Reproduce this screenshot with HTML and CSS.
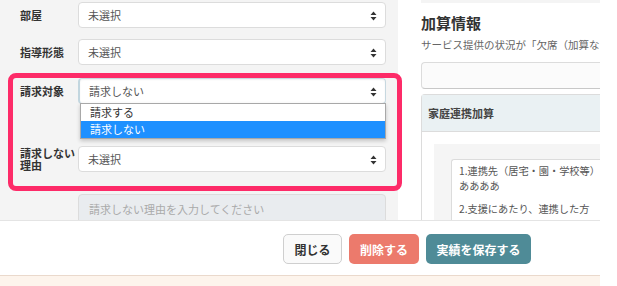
FILE: index.html
```html
<!doctype html>
<html>
    <head>
        <title>実績入力</title>
        <link rel="stylesheet" href="styles.css">
    </head>
    <body>
        <div class="modal">
            <div class="modal-body">
                <div class="left">
                    <div class="row">
                        <div class="label">部屋</div>
                        <div class="select">未選択<svg class="arrow" width="7" height="10" viewBox="0 0 7 10"><path d="M0.5 4 L3.5 0.5 L6.5 4 Z M0.5 6 L3.5 9.5 L6.5 6 Z" fill="#333"/></svg></div>
                    </div>
                    <div class="row">
                        <div class="label">指導形態</div>
                        <div class="select">未選択<svg class="arrow" width="7" height="10" viewBox="0 0 7 10"><path d="M0.5 4 L3.5 0.5 L6.5 4 Z M0.5 6 L3.5 9.5 L6.5 6 Z" fill="#333"/></svg></div>
                    </div>
                    <div class="highlight">
                        <div class="row row-open">
                            <div class="label">請求対象</div>
                            <div class="select focused">請求しない<svg class="arrow" width="7" height="10" viewBox="0 0 7 10"><path d="M0.5 4 L3.5 0.5 L6.5 4 Z M0.5 6 L3.5 9.5 L6.5 6 Z" fill="#333"/></svg>
                                <ul class="dropdown">
                                    <li>請求する</li>
                                    <li class="selected">請求しない</li>
                                </ul>
                            </div>
                        </div>
                        <div class="row row-reason">
                            <div class="label">請求しない理由</div>
                            <div class="select">未選択<svg class="arrow" width="7" height="10" viewBox="0 0 7 10"><path d="M0.5 4 L3.5 0.5 L6.5 4 Z M0.5 6 L3.5 9.5 L6.5 6 Z" fill="#333"/></svg></div>
                        </div>
                    </div>
                    <div class="row row-text">
                        <div class="label"></div>
                        <div class="textbox">請求しない理由を入力してください</div>
                    </div>
                </div>
                <div class="right">
                    <div class="top-strip"></div>
                    <h2>加算情報</h2>
                    <p class="note">サービス提供の状況が「欠席（加算な</p>
                    <div class="empty-box"></div>
                    <div class="card">
                        <div class="card-header">家庭連携加算</div>
                        <div class="card-body">
                            <div class="inner">
                                <div class="memo">
                                    <p>1.連携先（居宅・園・学校等）<br>ああああ</p>
                                    <p>2.支援にあたり、連携した方</p>
                                </div>
                            </div>
                        </div>
                    </div>
                </div>
            </div>
            <div class="modal-footer">
                <button class="btn btn-close">閉じる</button>
                <button class="btn btn-delete">削除する</button>
                <button class="btn btn-save">実績を保存する</button>
            </div>
            <div class="footer-strip"></div>
        </div>
    </body>
</html>
```

FILE: styles.css
```css
* {
    box-sizing: border-box;
}
body {
    margin: 0;
    background: #fff;
    color: #333;
    font-family: "Noto Sans CJK JP", "Noto Sans", sans-serif;
    font-size: 11px;
    overflow: hidden;
}
.modal {
    width: 600px;
}
.modal-body {
    display: flex;
    height: 220px;
    overflow: hidden;
}
.left {
    width: 398px;
    flex: none;
    background: #f4f4f4;
    padding: 2px 12px 0 20px;
}
.row {
    display: flex;
    align-items: center;
    margin-bottom: 11px;
}
.label {
    width: 58px;
    flex: none;
    font-weight: bold;
    color: #333;
    line-height: 12px;
}
.select {
    position: relative;
    flex: 1;
    height: 26px;
    background: #fff;
    border: 1px solid #dcdcdc;
    border-radius: 4px;
    padding: 0 9px;
    display: flex;
    align-items: center;
    color: #555;
}
.select.focused {
    border-color: #c7d8e0;
    border-left: 2px solid #c2d6df;
    box-shadow: inset 0 1px 2px rgba(0, 0, 0, 0.06);
}
.arrow {
    position: absolute;
    right: 8px;
    top: 8px;
}
.highlight {
    margin: -3px -16px 3px -12px;
    padding: 0 11px 0 7px;
    border: 5px solid #fd2b68;
    border-radius: 8px;
}
.row-open {
    margin-bottom: 42px;
}
.row-reason {
    margin-bottom: 14px;
}
.dropdown {
    position: absolute;
    left: 0;
    right: -1px;
    top: 24px;
    margin: 0;
    padding: 0;
    list-style: none;
    background: #fff;
    border: 1px solid #a8a8a8;
    box-shadow: 0 2px 4px rgba(0, 0, 0, 0.2);
    z-index: 2;
}
.dropdown li {
    height: 17px;
    line-height: 17px;
    padding-left: 9px;
    color: #333;
}
.dropdown li.selected {
    background: #1e90ff;
    color: #fff;
}
.textbox {
    flex: 1;
    height: 30px;
    background: #e9ecef;
    border: 1px solid #dcdcdc;
    border-radius: 4px;
    padding: 6px 10px;
    color: #aaa;
}
.right {
    flex: 1;
    padding-left: 23px;
    overflow: hidden;
}
.top-strip {
    height: 3px;
    background: #f4f4f4;
}
.right h2 {
    margin: 10px 0 0;
    font-size: 15px;
    line-height: 20px;
    color: #333;
}
.note {
    margin: 4px 0 0;
    font-size: 10.5px;
    color: #666;
    white-space: nowrap;
    line-height: 16px;
}
.empty-box {
    height: 27px;
    margin-top: 9px;
    border: 1px solid #dcdcdc;
    border-bottom-color: #c8c8c8;
    border-radius: 4px 0 0 4px;
    border-right: none;
    background: #fbfbfb;
}
.card {
    margin-top: 5px;
    border: 1px solid #dcdcdc;
    border-right: none;
    border-radius: 4px 0 0 0;
}
.card-header {
    height: 37px;
    line-height: 36px;
    padding-left: 6px;
    background: #eaf1f3;
    border-bottom: 1px solid #dcdcdc;
    font-weight: bold;
    color: #444;
}
.card-body {
    padding: 12px 0 0 12px;
    background: #fff;
}
.inner {
    background: #f5f5f5;
    padding: 15px 0 0 17px;
}
.memo {
    background: #fff;
    border: 1px solid #dcdcdc;
    border-right: none;
    border-radius: 3px 0 0 0;
    padding: 3px 0 10px 7px;
    font-size: 10.2px;
    color: #555;
    white-space: nowrap;
    line-height: 15px;
}
.memo p {
    margin: 0 0 8px;
}
.modal-footer {
    display: flex;
    justify-content: flex-end;
    gap: 7px;
    height: 55px;
    padding: 13px 69px 0 0;
    border-top: 1px solid #e4e4e4;
    background: #fff;
}
.btn {
    height: 30px;
    padding: 0;
    border-radius: 5px;
    border: 1px solid transparent;
    font-family: inherit;
    font-size: 12px;
    font-weight: bold;
    white-space: nowrap;
    cursor: pointer;
}
.btn-close {
    width: 59px;
    background: #fafafa;
    border-color: #cfcfcf;
    color: #333;
}
.btn-delete {
    width: 70px;
    background: #ec7a6c;
    color: #fff;
}
.btn-save {
    width: 105px;
    background: #4f8b97;
    color: #fff;
}
.footer-strip {
    height: 11px;
    border-top: 1px solid #ead9cc;
    background: #fdf4ec;
}
```
